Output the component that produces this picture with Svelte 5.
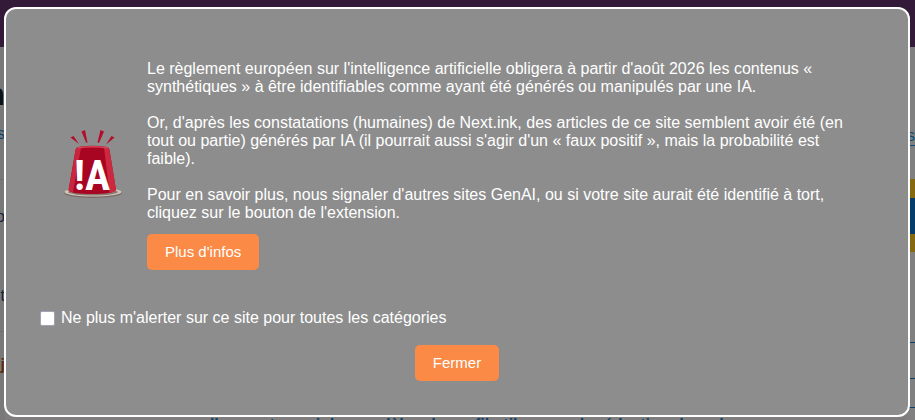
<script lang="ts">
  let open = $state(true);
  let muted = $state(false);

  function close() {
    open = false;
  }
</script>

<div class="page">
  <div class="topbar"></div>
  <div class="columns">
    <div class="rail">
      <div class="rail-block first">
        <span class="rail-title">n</span>
        <span class="rail-link">s</span>
      </div>
      <div class="rail-block second">
        <span>o</span>
        <span>t</span>
      </div>
      <div class="rail-block third">
        <b>j</b>
      </div>
    </div>
    <main class="article">
      <p class="headline">elles sont aussi des modèles de profil utiles pour la rédaction du web</p>
    </main>
    <aside class="aside">
      <a class="aside-link" href="#suivant">s</a>
      <div class="flag"></div>
      <div class="field"></div>
      <div class="field last"></div>
    </aside>
  </div>
</div>

{#if open}
  <div class="overlay">
    <div class="dialog" role="dialog" aria-modal="true" aria-label="Alerte IA">
      <div class="notice">
        <svg class="siren" viewBox="0 0 60 70" role="img" aria-label="IA">
          <ellipse cx="29" cy="63" rx="29" ry="5" fill="#766b66" />
          <ellipse cx="29" cy="62" rx="28.5" ry="4.5" fill="#cfc5b9" />
          <ellipse cx="29" cy="62" rx="25" ry="3.5" fill="#8b7b72" />
          <path d="M14 17 Q29 14.5 43 17 Q45 17.5 45.5 20 L52 60 Q49 64 28 64 Q8 64 4.5 60.5 L11.5 20 Q12 17.5 14 17Z" fill="#a80523" />
          <path d="M12 18 L17 18 L9 62.5 L4.5 60.5Z" fill="#c9253e" />
          <path d="M40 17.5 Q45 17 45.5 20 L52 60 Q50 62.5 45.5 63Z" fill="#cc2940" />
          <path d="M13.5 18 Q29 15.5 44 18" fill="none" stroke="#d94255" stroke-width="1.5" />
          <path d="M6.5 7.5 L9.5 6 L15 14Z M17.5 1.5 L21 0 L23.5 13 L22 12.5Z M36.5 0 L40 1.5 L35 13 L33.5 12.5Z M47.5 6 L50.5 7.5 L42 14.5Z" fill="#b50c2b" />
          <text class="siren-text" x="28" y="60" text-anchor="middle">!A</text>
        </svg>
        <div class="message">
          <p>
            Le règlement européen sur l'intelligence artificielle obligera à partir d'août 2026 les contenus «
            synthétiques » à être identifiables comme ayant été générés ou manipulés par une IA.
          </p>
          <p>
            Or, d'après les constatations (humaines) de Next.ink, des articles de ce site semblent avoir été (en
            tout ou partie) générés par IA (il pourrait aussi s'agir d'un « faux positif », mais la probabilité est
            faible).
          </p>
          <p>
            Pour en savoir plus, nous signaler d'autres sites GenAI, ou si votre site aurait été identifié à tort,
            cliquez sur le bouton de l'extension.
          </p>
          <button class="btn" type="button">Plus d'infos</button>
        </div>
      </div>

      <label class="mute">
        <input type="checkbox" bind:checked={muted} />
        <span>Ne plus m'alerter sur ce site pour toutes les catégories</span>
      </label>

      <div class="actions">
        <button class="btn" type="button" onclick={close}>Fermer</button>
      </div>
    </div>
  </div>
{/if}

<style>
:global(body) {
  margin: 0;
  overflow: hidden;
  background: #7f7d7d;
  font-family: "Liberation Sans", Arial, sans-serif;
  font-size: 16px;
}

.page {
  height: 100vh;
  overflow: hidden;
  display: flex;
  flex-direction: column;
}

.topbar {
  flex: 0 0 47px;
  background: #331a39;
}

.columns {
  flex: 1;
  display: flex;
  min-height: 0;
}

.rail {
  width: 5px;
  overflow: hidden;
  background: #7a7979;
  color: #13233a;
}

.rail-block {
  box-sizing: border-box;
  display: flex;
  flex-direction: column;
  align-items: flex-end;
  border-bottom: 1px solid #706f6f;
  line-height: 18px;
}

.first {
  height: 133px;
  padding-top: 30px;
}

.rail-title {
  color: #101013;
  font-size: 32px;
  font-weight: bold;
  line-height: 34px;
}

.rail-link {
  margin-top: 14px;
  color: #0b456c;
}

.second {
  height: 152px;
  padding-top: 28px;
  gap: 61px;
}

.third {
  padding-top: 24px;
  border: 0;
  color: #5a2d17;
}

.article {
  flex: 1;
  display: flex;
  align-items: flex-end;
  min-width: 0;
}

.headline {
  flex: 1;
  height: 4px;
  margin: 0;
  padding-left: 196px;
  color: #0b4068;
  font-weight: bold;
  line-height: 18px;
  white-space: nowrap;
}

.aside {
  width: 8px;
  overflow: hidden;
  background: #808080;
}

.aside-link {
  display: block;
  padding: 79px 0 33px;
  color: #0b4d78;
  line-height: 20px;
  text-underline-offset: 4px;
}

.flag {
  height: 36px;
  border: solid #866811;
  border-width: 19px 0 18px;
  background: #063c69;
}

.field {
  height: 35px;
  margin-top: 90px;
  border: solid #0b3f66;
  border-width: 1px 0;
}

.last {
  margin-top: 28px;
}

.overlay {
  position: fixed;
  inset: 0;
  padding: 7px 5px 3px 4px;
}

.dialog {
  box-sizing: border-box;
  min-height: 100%;
  padding: 34px;
  border: 2px solid #fff;
  border-radius: 12px;
  background: #8d8d8d;
  color: #fff;
  line-height: 18px;
}

.notice {
  display: flex;
  align-items: center;
  padding: 17px 24px;
}

.siren {
  flex: none;
  width: 60px;
  height: 70px;
  margin-right: 23px;
}

.siren-text {
  fill: #fff;
  font-family: "Roboto Condensed", "Open Sans Condensed", "Liberation Sans Narrow", "DejaVu Sans Condensed", sans-serif;
  font-size: 42px;
  font-weight: bold;
}

.message p {
  margin: 0 0 18px;
}

.message p:last-of-type {
  margin-bottom: 12px;
}

.btn {
  height: 36px;
  padding: 0 18px;
  border: 0;
  border-radius: 5px;
  background: #fa8a46;
  color: #fff;
  font-family: inherit;
  font-size: 15px;
  line-height: 18px;
  cursor: pointer;
}

.btn:hover {
  background: #e97a37;
}

.mute {
  display: flex;
  align-items: center;
  gap: 6px;
  margin-top: 22px;
}

.mute input {
  appearance: none;
  width: 15px;
  height: 15px;
  margin: 0;
  border: 1px solid #a5a1b5;
  border-radius: 2px;
  background: #fff;
}

.mute input:checked {
  background: #fa8a46;
}

.actions {
  display: flex;
  justify-content: center;
  margin-top: 18px;
}
</style>
